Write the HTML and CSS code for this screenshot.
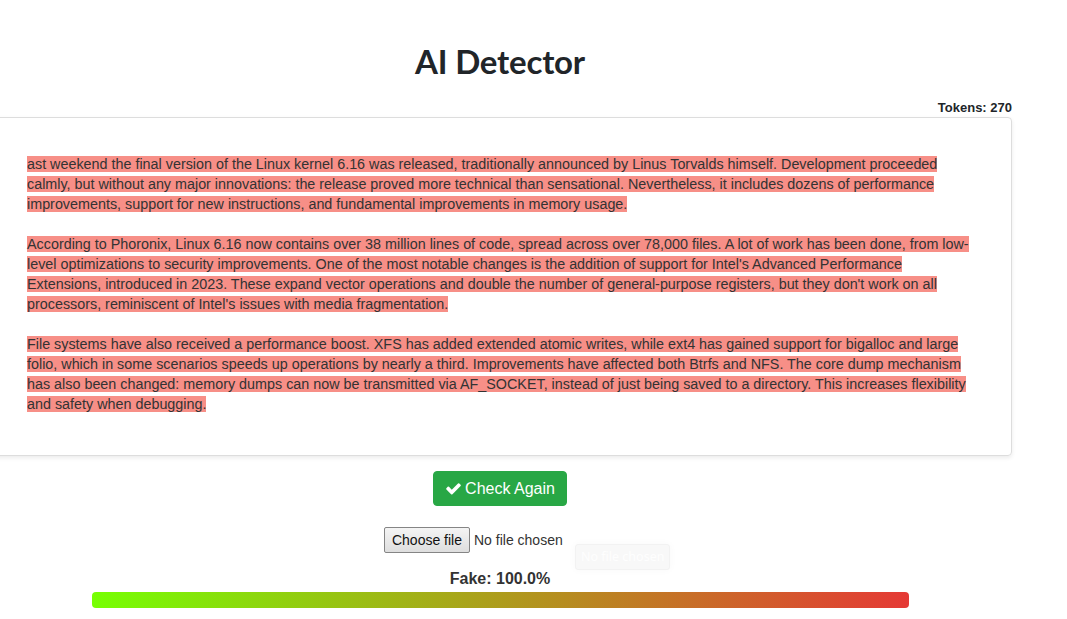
FILE: index.html
```html
<!DOCTYPE html>
<html lang="en">
<head>
<meta charset="utf-8">
<title>AI Detector</title>
<link rel="stylesheet" href="styles.css">
</head>
<body>
<div class="page">
  <h1 class="title">AI Detector</h1>
  <div class="tokens">Tokens: 270</div>
  <div class="card">
    <p class="para"><span class="caret"></span><span class="hl">ast weekend the final version of the Linux kernel 6.16 was released, traditionally announced by Linus Torvalds himself. Development proceeded calmly, but without any major innovations: the release proved more technical than sensational. Nevertheless, it includes dozens of performance improvements, support for new instructions, and fundamental improvements in memory usage.</span></p>
    <p class="para"><span class="hl">According to Phoronix, Linux 6.16 now contains over 38 million lines of code, spread across over 78,000 files. A lot of work has been done, from low-level optimizations to security improvements. One of the most notable changes is the addition of support for Intel's Advanced Performance Extensions, introduced in 2023. These expand vector operations and double the number of general-purpose registers, but they don't work on all processors, reminiscent of Intel's issues with media fragmentation.</span></p>
    <p class="para"><span class="hl">File systems have also received a performance boost. XFS has added extended atomic writes, while ext4 has gained support for bigalloc and large folio, which in some scenarios speeds up operations by nearly a third. Improvements have affected both Btrfs and NFS. The core dump mechanism has also been changed: memory dumps can now be transmitted via AF_SOCKET, instead of just being saved to a directory. This increases flexibility and safety when debugging.</span></p>
  </div>
  <div class="actions">
    <button class="btn-check" type="button"><svg class="icon" viewBox="0 0 1792 1792" aria-hidden="true"><path fill="currentColor" d="M1671 566q0 40-28 68l-724 724-136 136q-28 28-68 28t-68-28l-136-136-362-362q-28-28-28-68t28-68l136-136q28-28 68-28t68 28l294 295 656-657q28-28 68-28t68 28l136 136q28 28 28 68z"/></svg>Check Again</button>
  </div>
  <div class="upload">
    <label class="file">
      <input class="file-input" type="file">
      <span class="file-btn">Choose file</span>
      <span class="file-name">No file chosen</span>
    </label>
    <div class="tooltip">No file chosen</div>
  </div>
  <div class="result">Fake: 100.0%</div>
  <div class="meter"></div>
</div>
</body>
</html>
```
FILE: styles.css
```css
html, body {
  margin: 0;
  padding: 0;
  background: #fff;
  overflow: hidden;
}
body {
  font-family: "Liberation Sans", Arial, sans-serif;
  color: #333;
}
.page {
  width: 1024px;
  margin-left: -12px;
}
.title {
  margin: 0;
  padding-top: 41px;
  height: 40px;
  line-height: 40px;
  text-align: center;
  font-family: "Lato", "Liberation Sans", sans-serif;
  font-weight: 700;
  font-size: 33px;
  color: #212529;
  letter-spacing: -0.2px;
}
.tokens {
  margin-top: 19px;
  text-align: right;
  font-weight: 700;
  font-size: 13px;
  line-height: 15px;
  color: #212529;
  height: 15px;
}
.card {
  margin-top: 2px;
  border: 1px solid #ddd;
  border-radius: 4px;
  box-shadow: 0 2px 4px rgba(0,0,0,0.08);
  padding: 36px 36px 41px 38px;
  font-size: 14.35px;
  line-height: 20px;
  color: #333;
}
.para {
  margin: 0 0 20px 0;
}
.para:last-child {
  margin-bottom: 0;
}
.hl {
  background: #f78f87;
}
.caret {
  display: inline-block;
  width: 1px;
  height: 16px;
  background: #222;
  vertical-align: -3px;
  margin-right: -1px;
}
.actions {
  display: flex;
  justify-content: center;
  margin-top: 15px;
}
.btn-check {
  display: flex;
  align-items: center;
  gap: 3px;
  height: 35px;
  padding: 0 11px;
  border: 1px solid #28a745;
  border-radius: 4px;
  background: #28a745;
  color: #fff;
  font-family: "Liberation Sans", Arial, sans-serif;
  font-size: 16px;
}
.icon {
  width: 17px;
  height: 17px;
}
.upload {
  position: relative;
  display: flex;
  justify-content: center;
  margin-top: 21px;
}
.file {
  display: flex;
  align-items: center;
  width: 232px;
  font-family: "Liberation Sans", Arial, sans-serif;
  font-size: 14px;
}
.file-input {
  display: none;
}
.file-btn {
  box-sizing: border-box;
  height: 26px;
  width: 86px;
  display: flex;
  align-items: center;
  justify-content: center;
  border: 1px solid #858585;
  border-radius: 2px;
  background: linear-gradient(#f4f4f4, #dedede);
  color: #111;
}
.file-name {
  margin-left: 4px;
  color: #333;
}
.tooltip {
  position: absolute;
  left: 587px;
  top: 17px;
  padding: 4px 5px;
  background: #f8f8f8;
  border: 1px solid #f2f2f2;
  border-radius: 3px;
  color: #fefefe;
  font-family: "Noto Sans", sans-serif;
  font-size: 12.5px;
  line-height: 16px;
  box-shadow: 0 0 8px rgba(0,0,0,0.03);
}
.result {
  margin-top: 18px;
  text-align: center;
  font-weight: 700;
  font-size: 16px;
  line-height: 16px;
  color: #333;
}
.meter {
  margin: 5px auto 0;
  width: 817px;
  height: 16px;
  border-radius: 4px;
  background: linear-gradient(to right, #76ff03, #e53935);
}
```
